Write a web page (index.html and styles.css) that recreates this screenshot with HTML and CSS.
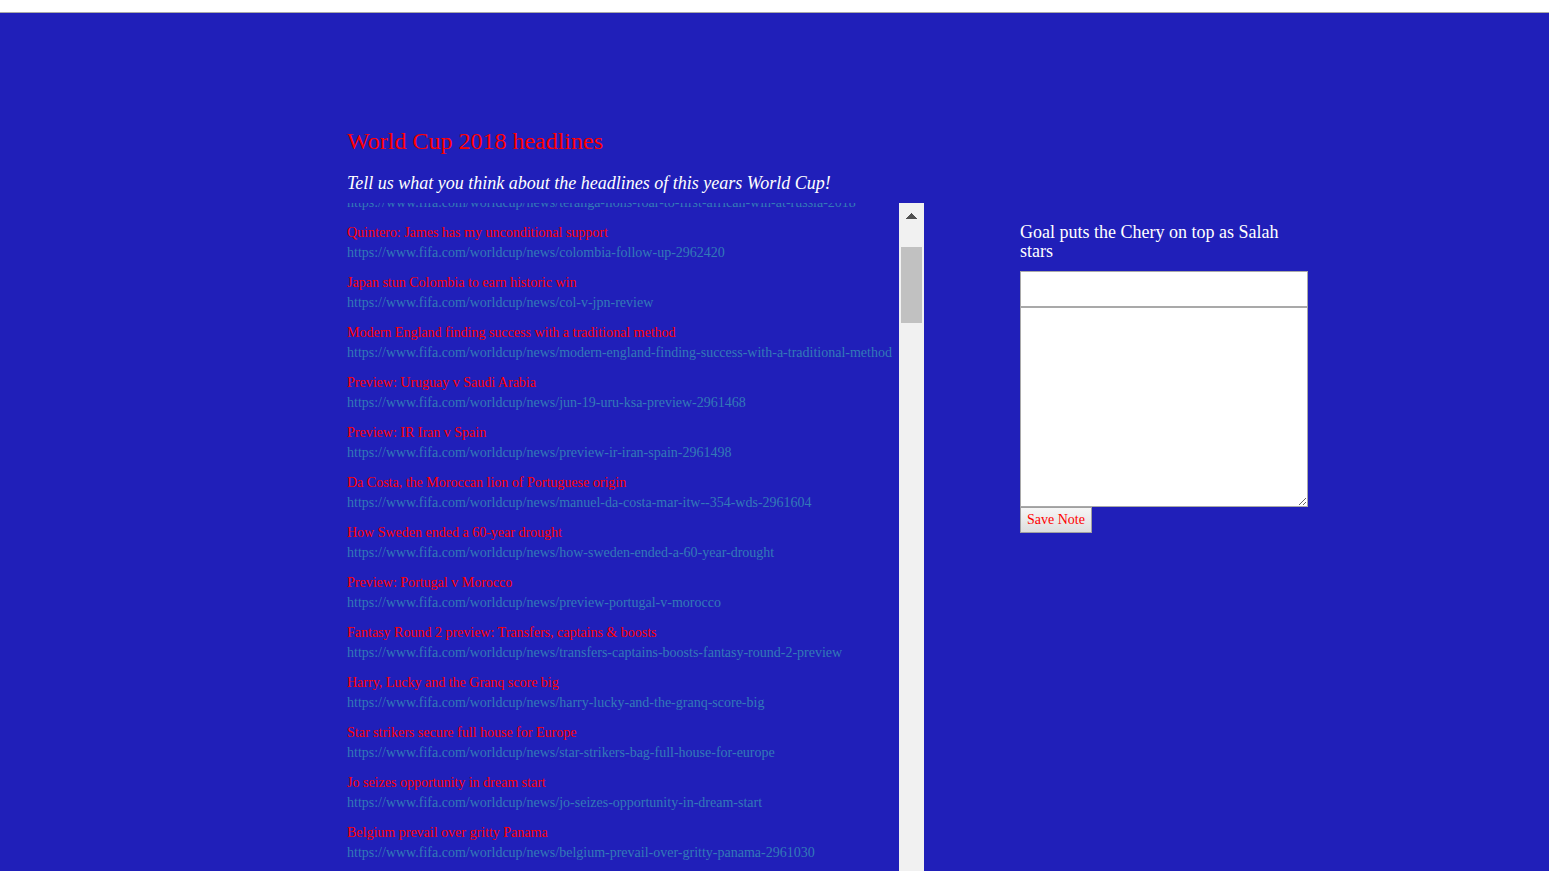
FILE: index.html
```html
<!DOCTYPE html>
<html lang="en">
<head>
<meta charset="utf-8">
<title>World Cup 2018 headlines</title>
<link rel="stylesheet" href="styles.css">
</head>
<body>
<div class="topbar"></div>
<main class="layout">
  <section class="headlines">
    <h1 class="title">World Cup 2018 headlines</h1>
    <p class="subtitle">Tell us what you think about the headlines of this years World Cup!</p>
    <div class="feed">
      <div class="viewport">
        <ul class="articles">
          <li class="article"><a class="link" href="https://www.fifa.com/worldcup/news/teranga-lions-roar-to-first-african-win-at-russia-2018">https://www.fifa.com/worldcup/news/teranga-lions-roar-to-first-african-win-at-russia-2018</a></li>
          <li class="article">Quintero: James has my unconditional support<a class="link" href="https://www.fifa.com/worldcup/news/colombia-follow-up-2962420">https://www.fifa.com/worldcup/news/colombia-follow-up-2962420</a></li>
          <li class="article">Japan stun Colombia to earn historic win<a class="link" href="https://www.fifa.com/worldcup/news/col-v-jpn-review">https://www.fifa.com/worldcup/news/col-v-jpn-review</a></li>
          <li class="article">Modern England finding success with a traditional method<a class="link" href="https://www.fifa.com/worldcup/news/modern-england-finding-success-with-a-traditional-method">https://www.fifa.com/worldcup/news/modern-england-finding-success-with-a-traditional-method</a></li>
          <li class="article">Preview: Uruguay v Saudi Arabia<a class="link" href="https://www.fifa.com/worldcup/news/jun-19-uru-ksa-preview-2961468">https://www.fifa.com/worldcup/news/jun-19-uru-ksa-preview-2961468</a></li>
          <li class="article">Preview: IR Iran v Spain<a class="link" href="https://www.fifa.com/worldcup/news/preview-ir-iran-spain-2961498">https://www.fifa.com/worldcup/news/preview-ir-iran-spain-2961498</a></li>
          <li class="article">Da Costa, the Moroccan lion of Portuguese origin<a class="link" href="https://www.fifa.com/worldcup/news/manuel-da-costa-mar-itw--354-wds-2961604">https://www.fifa.com/worldcup/news/manuel-da-costa-mar-itw--354-wds-2961604</a></li>
          <li class="article">How Sweden ended a 60-year drought<a class="link" href="https://www.fifa.com/worldcup/news/how-sweden-ended-a-60-year-drought">https://www.fifa.com/worldcup/news/how-sweden-ended-a-60-year-drought</a></li>
          <li class="article">Preview: Portugal v Morocco<a class="link" href="https://www.fifa.com/worldcup/news/preview-portugal-v-morocco">https://www.fifa.com/worldcup/news/preview-portugal-v-morocco</a></li>
          <li class="article">Fantasy Round 2 preview: Transfers, captains &amp; boosts<a class="link" href="https://www.fifa.com/worldcup/news/transfers-captains-boosts-fantasy-round-2-preview">https://www.fifa.com/worldcup/news/transfers-captains-boosts-fantasy-round-2-preview</a></li>
          <li class="article">Harry, Lucky and the Granq score big<a class="link" href="https://www.fifa.com/worldcup/news/harry-lucky-and-the-granq-score-big">https://www.fifa.com/worldcup/news/harry-lucky-and-the-granq-score-big</a></li>
          <li class="article">Star strikers secure full house for Europe<a class="link" href="https://www.fifa.com/worldcup/news/star-strikers-bag-full-house-for-europe">https://www.fifa.com/worldcup/news/star-strikers-bag-full-house-for-europe</a></li>
          <li class="article">Jo seizes opportunity in dream start<a class="link" href="https://www.fifa.com/worldcup/news/jo-seizes-opportunity-in-dream-start">https://www.fifa.com/worldcup/news/jo-seizes-opportunity-in-dream-start</a></li>
          <li class="article">Belgium prevail over gritty Panama<a class="link" href="https://www.fifa.com/worldcup/news/belgium-prevail-over-gritty-panama-2961030">https://www.fifa.com/worldcup/news/belgium-prevail-over-gritty-panama-2961030</a></li>
        </ul>
      </div>
      <div class="scrollbar" aria-hidden="true">
        <svg class="arrow" width="11" height="6" viewBox="0 0 11 6" shape-rendering="crispEdges"><path d="M5 0h1v1h1v1h1v1h1v1h1v1h1v1H0V5h1V4h1V3h1V2h1V1h1z" fill="#505050"/></svg>
        <div class="thumb"></div>
      </div>
    </div>
  </section>
  <form class="note">
    <h2 class="note-title">Goal puts the Chery on top as Salah stars</h2>
    <input class="note-input" type="text" name="title" aria-label="Note title">
    <textarea class="note-body" name="body" aria-label="Note text"></textarea>
    <button class="save" type="button">Save Note</button>
  </form>
</main>
</body>
</html>
```

FILE: styles.css
```css
* {
  box-sizing: border-box;
}

body {
  display: flex;
  flex-direction: column;
  height: 100vh;
  margin: 0;
  overflow: hidden;
  background: #201fb9;
  color: #fff;
  font-family: "Liberation Serif", "Times New Roman", serif;
  font-size: 14px;
  line-height: 20px;
}

.topbar {
  flex: none;
  height: 13px;
  background: #fff;
  border-bottom: 1px solid #a9a9a9;
}

.layout {
  flex: 1;
  min-height: 0;
  display: grid;
  grid-template-columns: 347fr 577fr 96fr 288fr 241fr;
  grid-template-rows: minmax(0, 1fr);
}

.headlines {
  grid-column: 2;
  min-width: 0;
  display: flex;
  flex-direction: column;
  padding-top: 113px;
}

.title {
  margin: 0 0 17px;
  color: #f00;
  font-size: 24px;
  font-weight: 400;
  line-height: 30px;
}

.subtitle {
  margin: 0 0 10px;
  font-size: 18px;
  font-style: italic;
  line-height: 20px;
  white-space: nowrap;
}

.feed {
  flex: 1;
  min-height: 0;
  display: flex;
}

.viewport {
  flex: 1;
  min-width: 0;
  overflow: hidden;
}

.articles {
  margin: -10px 0 0;
  padding: 0;
  list-style: none;
}

.article {
  margin-bottom: 10px;
  color: #f00;
  white-space: nowrap;
}

.link {
  display: block;
  color: #337ab7;
  text-decoration: none;
}

.scrollbar {
  flex: none;
  width: 25px;
  padding: 10px 2px 0;
  background: #f1f1f1;
}

.arrow {
  display: block;
  margin: 0 auto 28px;
}

.thumb {
  height: 76px;
  background: #c1c1c1;
}

.note {
  grid-column: 4;
  display: flex;
  flex-direction: column;
  align-items: flex-start;
  padding-top: 210px;
}

.note-title {
  margin: 0 0 10px;
  font-size: 18px;
  font-weight: 400;
  line-height: 19px;
}

.note-input,
.note-body {
  width: 100%;
  margin: 0;
  padding: 2px 6px;
  border: 1px solid #a9a9a9;
  border-radius: 0;
  background: #fff;
  font: inherit;
  color: #000;
}

.note-input {
  height: 36px;
}

.note-body {
  height: 200px;
  resize: vertical;
}

.save {
  height: 26px;
  padding: 0 6px;
  border: 1px solid #a0a0a0;
  background: linear-gradient(#f6f6f6, #dedede);
  color: #f00;
  font: inherit;
}
```
